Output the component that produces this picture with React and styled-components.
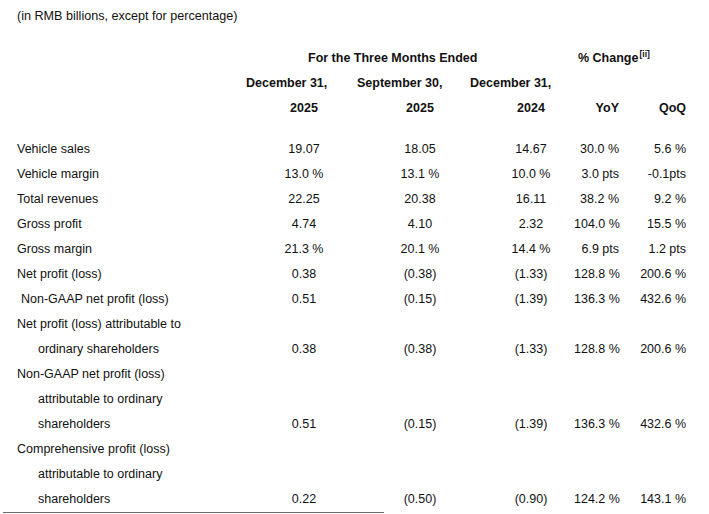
import React from "react";
import styled, { createGlobalStyle } from "styled-components";

const Global = createGlobalStyle`
  html, body { margin: 0; padding: 0; background: #ffffff; }
  body {
    font-family: "Liberation Sans", Arial, sans-serif;
    font-size: 12.5px;
    color: #111111;
  }
`;

const COLS = "239px 96px 136px 86px 45px 67px";

const Page = styled.div`
  width: 709px;
  height: 514px;
  overflow: hidden;
  padding: 4px 0 0 17px;
  box-sizing: border-box;
  display: flex;
  flex-direction: column;
`;

const Title = styled.div`
  height: 25px;
  line-height: 25px;
  font-size: 12.6px;
  white-space: nowrap;
`;

const HeaderBlock = styled.div`
  margin-top: 17px;
  display: flex;
  flex-direction: column;
  font-weight: 700;
`;

const GridRow = styled.div`
  display: grid;
  grid-template-columns: ${COLS};
  height: 25px;
  line-height: 25px;
  white-space: nowrap;
`;

const SpanCell = styled.div`
  grid-column: ${(p) => p.$col};
  padding-left: ${(p) => p.$pl || 0}px;
  text-align: left;
`;

const Sup = styled.sup`
  font-size: 8.5px;
  vertical-align: 0;
  position: relative;
  top: -5px;
  margin-left: 1px;
`;

const DateRow = styled.div`
  display: flex;
  height: 25px;
  line-height: 25px;
  padding-left: 229px;
  white-space: nowrap;
`;

const DateCell = styled.div`
  width: ${(p) => p.$w}px;
  flex: none;
`;

const Cell = styled.div`
  text-align: ${(p) => (p.$right ? "right" : "center")};
`;

const Body = styled.div`
  margin-top: 16px;
  display: flex;
  flex-direction: column;
`;

const Label = styled.div`
  padding-left: ${(p) => p.$indent}px;
`;

const Rule = styled.div`
  margin-left: -14px;
  width: 381px;
  height: 1px;
  background: #6a6a6a;
`;

const rows = [
  ["Vehicle sales", 0, "19.07", "18.05", "14.67", "30.0 %", "5.6 %"],
  ["Vehicle margin", 0, "13.0 %", "13.1 %", "10.0 %", "3.0 pts", "-0.1pts"],
  ["Total revenues", 0, "22.25", "20.38", "16.11", "38.2 %", "9.2 %"],
  ["Gross profit", 0, "4.74", "4.10", "2.32", "104.0 %", "15.5 %"],
  ["Gross margin", 0, "21.3 %", "20.1 %", "14.4 %", "6.9 pts", "1.2 pts"],
  ["Net profit (loss)", 0, "0.38", "(0.38)", "(1.33)", "128.8 %", "200.6 %"],
  ["Non-GAAP net profit (loss)", 4, "0.51", "(0.15)", "(1.39)", "136.3 %", "432.6 %"],
  ["Net profit (loss) attributable to", 0],
  ["ordinary shareholders", 21, "0.38", "(0.38)", "(1.33)", "128.8 %", "200.6 %"],
  ["Non-GAAP net profit (loss)", 0],
  ["attributable to ordinary", 21],
  ["shareholders", 21, "0.51", "(0.15)", "(1.39)", "136.3 %", "432.6 %"],
  ["Comprehensive profit (loss)", 0],
  ["attributable to ordinary", 21],
  ["shareholders", 21, "0.22", "(0.50)", "(0.90)", "124.2 %", "143.1 %"],
];

export default function App() {
  return (
    <>
      <Global />
      <Page>
        <Title>(in RMB billions, except for percentage)</Title>
        <HeaderBlock>
          <GridRow>
            <SpanCell $col="2 / 5" $pl={52}>For the Three Months Ended</SpanCell>
            <SpanCell $col="5 / 7" $pl={4}>
              % Change<Sup>[ii]</Sup>
            </SpanCell>
          </GridRow>
          <DateRow>
            <DateCell $w={111}>December 31,</DateCell>
            <DateCell $w={113}>September 30,</DateCell>
            <DateCell $w={100}>December 31,</DateCell>
          </DateRow>
          <GridRow>
            <div />
            <Cell>2025</Cell>
            <Cell>2025</Cell>
            <Cell>2024</Cell>
            <Cell $right>YoY</Cell>
            <Cell $right>QoQ</Cell>
          </GridRow>
        </HeaderBlock>
        <Body>
          {rows.map(([label, indent, ...vals], i) => (
            <GridRow key={i}>
              <Label $indent={indent}>{label}</Label>
              {vals.length > 0 && (
                <>
                  <Cell>{vals[0]}</Cell>
                  <Cell>{vals[1]}</Cell>
                  <Cell>{vals[2]}</Cell>
                  <Cell $right>{vals[3]}</Cell>
                  <Cell $right>{vals[4]}</Cell>
                </>
              )}
            </GridRow>
          ))}
        </Body>
        <Rule />
      </Page>
    </>
  );
}
